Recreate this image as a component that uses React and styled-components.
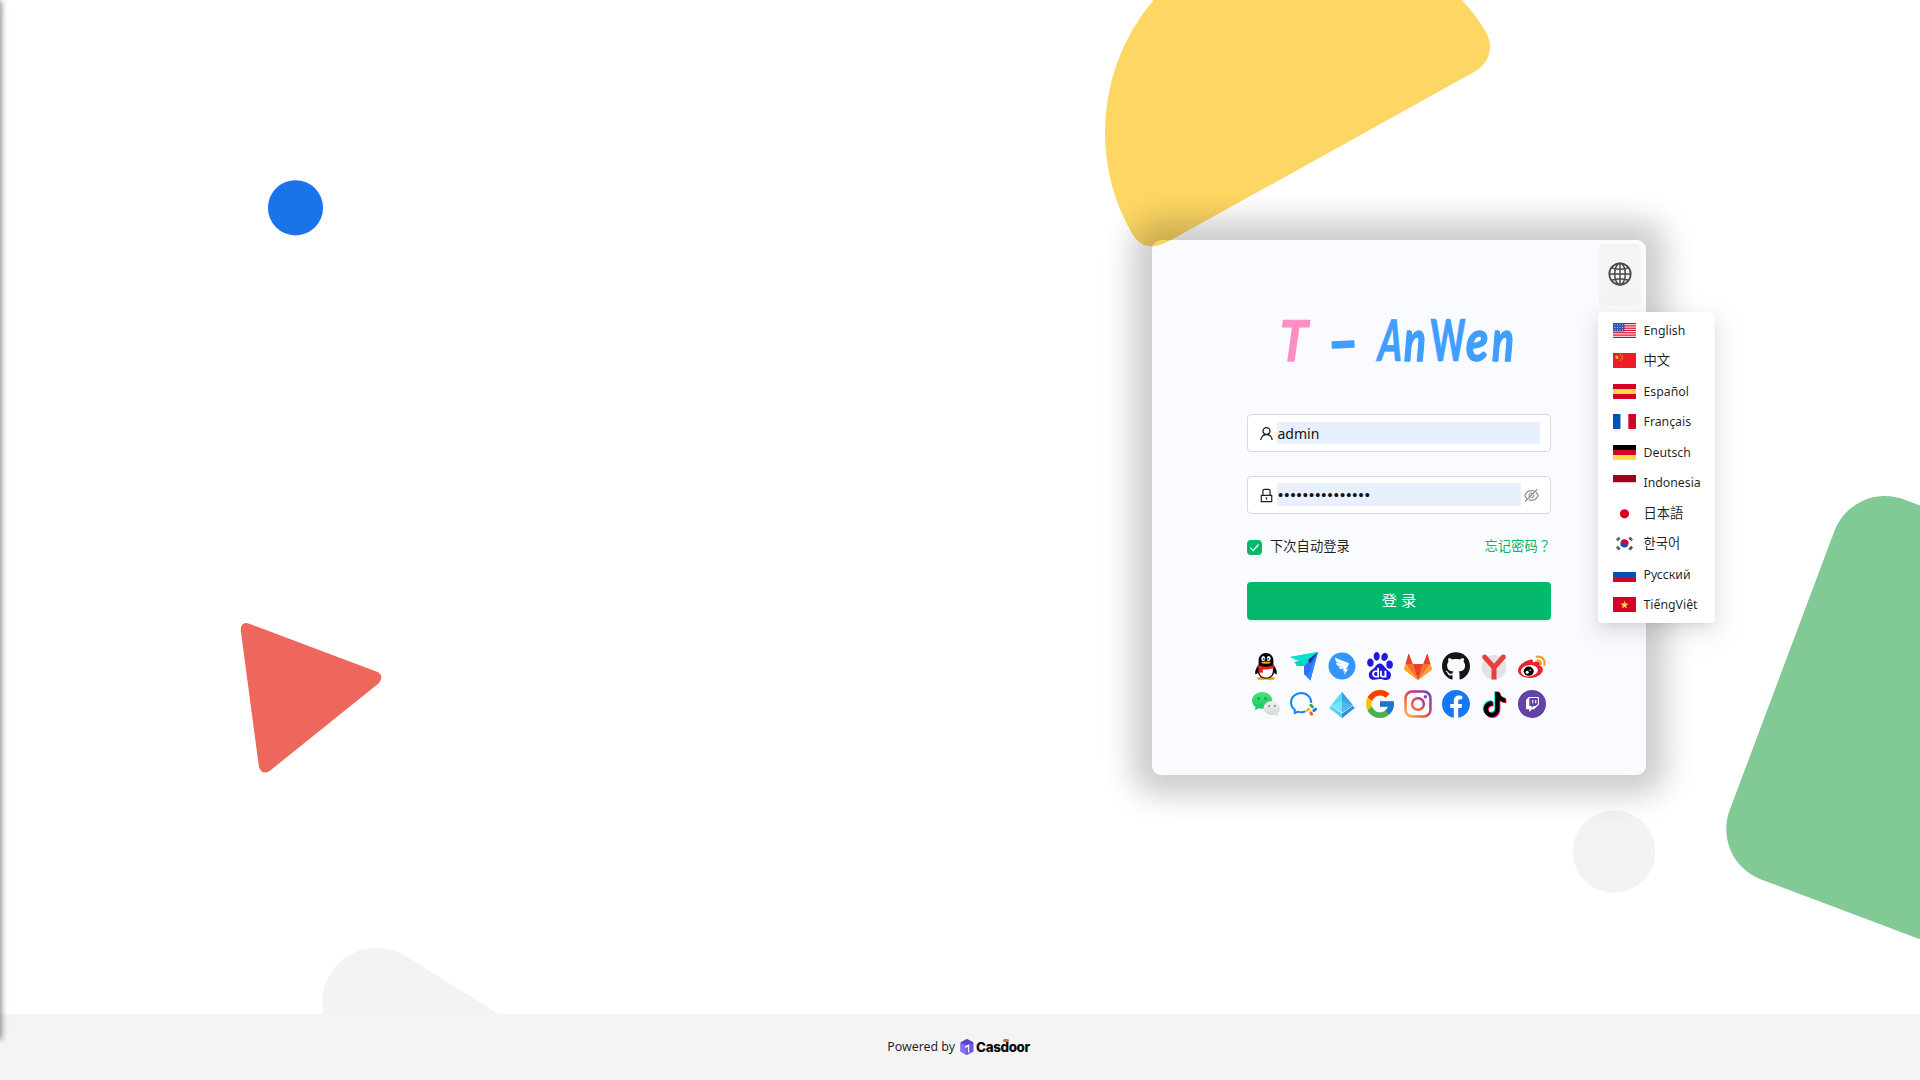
import React from "react";
import styled, { createGlobalStyle } from "styled-components";
import {
  AiOutlineUser,
  AiOutlineLock,
  AiOutlineEyeInvisible,
  AiFillDingtalkCircle,
} from "react-icons/ai";
import { FaGithub, FaFacebook, FaTiktok } from "react-icons/fa";
import { SiBaidu, SiTwitch } from "react-icons/si";
import { FcGoogle } from "react-icons/fc";

const GlobalStyle = createGlobalStyle`
  *, *::before, *::after { box-sizing: border-box; }
  body {
    margin: 0;
    background: #fff;
    color: rgba(0, 0, 0, 0.88);
    font-family: "Noto Sans", "Noto Sans CJK SC", "Noto Sans CJK KR", sans-serif;
    font-size: 13.3px;
  }
`;

/* ---------- page frame ---------- */

const Page = styled.div`
  position: relative;
  display: flex;
  flex-direction: column;
  width: 1920px;
  height: 1080px;
  overflow: hidden;
`;

const Backdrop = styled.svg`
  position: absolute;
  inset: 0;
  display: block;
`;

const EdgeShadow = styled.div`
  position: absolute;
  left: -4px;
  top: 2px;
  width: 4px;
  height: 1036px;
  box-shadow: 0 0 6px 1px rgba(0, 0, 0, 0.55);
  z-index: 3;
`;

const Main = styled.main`
  position: relative;
  flex: 1;
  display: flex;
  justify-content: flex-end;
  align-items: flex-start;
  padding: 240px 274px 0 0;
`;

const Footer = styled.footer`
  position: relative;
  display: flex;
  justify-content: center;
  align-items: center;
  height: 66px;
  padding-right: 3px;
  background: #f4f4f4;
  font-size: 12.4px;
  line-height: 18px;
`;

const Brand = styled.span`
  display: inline-flex;
  align-items: center;
  gap: 2px;
  margin-left: 5px;
`;

const BrandName = styled.span`
  position: relative;
  color: #0b0b0b;
  font-family: Inter, sans-serif;
  font-size: 13.4px;
  font-weight: 800;
  letter-spacing: -0.35px;

  &::after {
    content: "";
    position: absolute;
    top: 1px;
    left: 27px;
    width: 6px;
    height: 3px;
    border-radius: 2px;
    background: #c2703a;
  }
`;

/* ---------- login card ---------- */

const Card = styled.section`
  position: relative;
  display: flex;
  flex-direction: column;
  align-items: center;
  width: 494px;
  height: 535px;
  padding-top: 60px;
  border-radius: 9px;
  background: rgba(0, 64, 255, 0.024);
  box-shadow: 0 0 30px 20px rgba(0, 0, 0, 0.2);
`;

const Logo = styled.svg`
  display: block;
  width: 304px;
  height: 80px;
  margin-bottom: 34px;
  overflow: visible;
`;

const Form = styled.form`
  display: flex;
  flex-direction: column;
  width: 304px;
`;

const Field = styled.label`
  display: flex;
  align-items: center;
  height: 38px;
  margin-bottom: 24px;
  padding: 0 10px 0 10px;
  border: 1px solid #d9d9d9;
  border-radius: 4px;
  background: #fff;
`;

const FieldIcon = styled.span`
  display: flex;
  flex: none;
  width: 19px;
  color: ${(p) => (p.$muted ? "#8f8f8f" : "#1f1f1f")};
  font-size: 17px;
  justify-content: ${(p) => (p.$muted ? "flex-end" : "flex-start")};
`;

const FieldValue = styled.span`
  flex: 1;
  height: ${(p) => (p.$secret ? 23 : 22)}px;
  margin-top: ${(p) => (p.$secret ? -1 : 0)}px;
  padding-left: ${(p) => (p.$secret ? 1 : 0.5)}px;
  background: #e8f0fe;
  color: #111;
  font-family: ${(p) => (p.$secret ? '"Liberation Sans"' : '"Noto Sans"')}, sans-serif;
  font-size: ${(p) => (p.$secret ? 14.5 : 14)}px;
  line-height: ${(p) => (p.$secret ? 24 : 23)}px;
  letter-spacing: ${(p) => (p.$secret ? "1.12px" : "0")};
`;

const Options = styled.div`
  display: flex;
  align-items: center;
  justify-content: space-between;
  height: 20px;
  margin: -1px 0 25px;
`;

const Remember = styled.span`
  display: inline-flex;
  align-items: center;
  gap: 8px;
`;

const OptionText = styled.span`
  height: 22px;
  line-height: 20px;
`;

const CheckBox = styled.span`
  display: flex;
  width: 15px;
  height: 15px;
  border-radius: 4px;
  background: #04b96b;
`;

const Forgot = styled.a`
  height: 22px;
  color: #04b96b;
  line-height: 20px;
`;

const FullWidthMark = styled.span`
  font-family: "Noto Sans CJK TC", sans-serif;
`;

const Submit = styled.button`
  height: 38px;
  padding: 0 0 2px;
  border: 0;
  border-radius: 4px;
  background: #04b96b;
  box-shadow: 0 2px 0 rgba(4, 185, 107, 0.1);
  color: #fff;
  font-family: "Noto Sans", "Noto Sans CJK SC", sans-serif;
  font-size: 15.2px;
  line-height: 36px;
`;

const Providers = styled.div`
  display: grid;
  grid-template-columns: repeat(8, 38px);
  grid-auto-rows: 38px;
  place-items: center;
  margin-top: 27px;
`;

const Provider = styled.a`
  display: flex;
  width: 28px;
  height: 28px;
`;

const Badge = styled.span`
  display: flex;
  align-items: center;
  justify-content: center;
  width: 28px;
  height: 28px;
  border-radius: 50%;
  background: ${(p) => p.$fill};
`;

const Stack = styled.span`
  display: grid;
  place-items: center;
  width: 28px;
  height: 28px;
  & > svg { grid-area: 1 / 1; }
`;

const Layer = styled(FaTiktok)`
  color: ${(p) => p.color};
  transform: translate(${(p) => p.$shift}px, ${(p) => p.$shift}px);
`;

/* ---------- language menu ---------- */

const LanguageButton = styled.div`
  position: absolute;
  top: 4px;
  right: 5px;
  display: flex;
  align-items: center;
  justify-content: center;
  width: 42px;
  height: 61px;
  padding: 0 1px 1px 0;
  border-radius: 4px;
  background: #f4f4f4;
`;

const Menu = styled.ul`
  position: absolute;
  top: 72px;
  left: 446px;
  z-index: 2;
  display: flex;
  flex-direction: column;
  width: 117px;
  height: 311px;
  margin: 0;
  padding: 3px 4px;
  border-radius: 4px;
  background: #fff;
  box-shadow:
    0 6px 16px 0 rgba(0, 0, 0, 0.08),
    0 3px 6px -4px rgba(0, 0, 0, 0.12),
    0 9px 28px 8px rgba(0, 0, 0, 0.05);
  list-style: none;
`;

const MenuItem = styled.li`
  flex: 1;
  display: flex;
  align-items: center;
  gap: 7.5px;
  padding-left: 11px;
  font-size: ${(p) => (p.$cjk ? 13.3 : 12.3)}px;
  line-height: 20px;
  white-space: nowrap;
`;

const MenuLabel = styled.span`
  padding-top: ${(p) => (p.$cjk ? 0 : 1)}px;
  padding-bottom: ${(p) => (p.$cjk ? 1 : 0)}px;
`;

const FlagBox = styled.svg`
  display: block;
  flex: none;
  width: 23px;
  height: 15px;
`;

const Bands = ({ colors, vertical }) =>
  colors.map((c, i) =>
    vertical ? (
      <rect key={i} x={(i * 23) / colors.length} width={23 / colors.length} height="15" fill={c} />
    ) : (
      <rect key={i} y={(i * 15) / colors.length} width="23" height={15 / colors.length} fill={c} />
    )
  );

const star = (cx, cy, r) =>
  Array.from({ length: 10 }, (_, i) => {
    const a = (Math.PI / 5) * i - Math.PI / 2;
    const q = i % 2 ? r * 0.4 : r;
    return `${cx + q * Math.cos(a)},${cy + q * Math.sin(a)}`;
  }).join(" ");

const languages = [
  {
    name: "English",
    flag: (
      <>
        <rect width="23" height="15" fill="#fff" />
        {[0, 1, 2, 3, 4, 5, 6].map((i) => (
          <rect key={i} y={i * 2.3} width="23" height="1.2" fill="#d80027" />
        ))}
        <rect width="11.5" height="8.5" fill="#2e52b2" />
        {[1.5, 4, 6.5].map((y) =>
          [1.5, 4, 6.5, 9].map((x) => (
            <rect key={`${x}-${y}`} x={x} y={y} width="1" height="1" fill="#c9d3ee" />
          ))
        )}
      </>
    ),
  },
  {
    name: "中文",
    cjk: true,
    flag: (
      <>
        <rect width="23" height="15" fill="#ee1c25" />
        <polygon points={star(4, 4.2, 2.4)} fill="#ffda2c" />
        {[[7.6, 1.6], [9.2, 3.4], [9.2, 5.6], [7.6, 7.2]].map(([x, y]) => (
          <circle key={y} cx={x} cy={y} r="0.6" fill="#ffda2c" />
        ))}
      </>
    ),
  },
  {
    name: "Español",
    flag: (
      <>
        <rect width="23" height="15" fill="#d80027" />
        <rect y="5" width="23" height="5" fill="#ffda44" />
      </>
    ),
  },
  { name: "Français", flag: <Bands vertical colors={["#0052b4", "#fff", "#d80027"]} /> },
  { name: "Deutsch", flag: <Bands colors={["#000", "#d80027", "#ffda44"]} /> },
  { name: "Indonesia", flag: <Bands colors={["#a2001d", "#fff"]} /> },
  { name: "日本語", cjk: true, flag: <circle cx="11.5" cy="7.8" r="4.6" fill="#d80027" /> },
  {
    name: "한국어",
    cjk: true,
    flag: (
      <>
        <path d="M7.6 6.2a4 4 0 0 1 7.8 2.4q-2 1.6-3.9-.6-2-2-3.9-1.8z" fill="#d80027" />
        <path d="M7.6 6.2q2-.6 3.9 1.6t3.9.8a4 4 0 0 1-7.8-2.4z" fill="#0052b4" />
        <g stroke="#333" strokeWidth="2.8" strokeDasharray="1.1 0.3">
          <path d="M4 4.200 6.600 1.800M16.400 1.800 19 4.200M4 10.800 6.600 13.400M16.400 13.400 19 10.800" />
        </g>
      </>
    ),
  },
  { name: "Русский", flag: <Bands colors={["#fff", "#0052b4", "#d80027"]} /> },
  {
    name: "TiếngViệt",
    flag: (
      <>
        <rect width="23" height="15" fill="#d80027" />
        <polygon points={star(11.5, 8, 4.3)} fill="#ffda44" />
      </>
    ),
  },
];

/* ---------- provider icons ---------- */

const Icon28 = ({ children }) => (
  <svg width="28" height="28" viewBox="0 0 28 28" overflow="visible">
    {children}
  </svg>
);

const QQ = () => (
  <Icon28>
    <ellipse cx="9.8" cy="26.3" rx="4.6" ry="1.9" fill="#f9a51a" />
    <ellipse cx="18.2" cy="26.3" rx="4.6" ry="1.9" fill="#f9a51a" />
    <path d="M14 1C9.500 1 6.600 4.200 6.600 8.500v4C4.800 15 2.800 18.500 3.200 21.400c.3 1.600 1.500.9 2.600-.8C6.800 24.500 10 26.600 14 26.600s7.200-2.100 8.200-6c1.100 1.700 2.300 2.400 2.600.8.4-2.900-1.600-6.400-3.400-8.900v-4C21.400 4.200 18.500 1 14 1z" fill="#050505" />
    <path d="M7.300 15.500C6.200 22 9.300 25.600 14 25.600s7.800-3.600 6.700-10.100z" fill="#fff" />
    <ellipse cx="11.3" cy="6.500" rx="1.900" ry="2.500" fill="#fff" />
    <ellipse cx="16.7" cy="6.500" rx="1.900" ry="2.500" fill="#fff" />
    <circle cx="11.800" cy="6.900" r=".8" />
    <circle cx="16.200" cy="6.900" r=".8" />
    <ellipse cx="14" cy="10.600" rx="4.600" ry="1.200" fill="#f9a51a" />
    <path d="M6.400 13c4.500 2.400 10.700 2.400 15.200 0l.9 2.500c-3.400 1.800-7.600 2.500-11.600 1.900v3.400l-4.500-.4.300-4.100-1.100-1z" fill="#eb1c23" />
  </Icon28>
);

const Lark = () => (
  <Icon28>
    <path d="M0 5 28 0 14 14l-7 .3L4.400 10.200 9 8.200z" fill="#00d6b9" />
    <path d="M0 5 28 0 18 8.600 6 8z" fill="#00e5d0" />
    <path d="M28 0 20.400 28.600 14 22V14l5-5z" fill="#3370ff" />
    <path d="M28 0 20.400 28.600 17 25z" fill="#2b8cff" />
    <path d="m28 0-9.500 7.300V10l2 1z" fill="#133c9a" />
  </Icon28>
);

const GitLab = () => (
  <Icon28>
    <path d="M14 28.500 8.800 12h10.400z" fill="#e24329" />
    <path d="M14 28.500 8.800 12H1.500zM14 28.500 19.200 12h7.300z" fill="#fc6d26" />
    <path d="M1.500 12 0 16.700q-.1.700.5 1.200L14 28.500zM26.500 12l1.500 4.700q.1.700-.5 1.200L14 28.500z" fill="#fca326" />
    <path d="M1.500 12h7.300L5.200 2.300q-.5-.9-1 0zM26.500 12h-7.300l3.600-9.700q.5-.9 1 0z" fill="#e24329" />
  </Icon28>
);

const Yandex = () => (
  <Icon28>
    <circle cx="14" cy="15.300" r="12.300" fill="#e3e3e3" />
    <path d="M4.800 5.200 14 15.500l9.200-10.300M14 15v12.500" fill="none" stroke="#e8403c" strokeWidth="5" />
    <circle cx="4.700" cy="5" r="2.500" fill="#e8403c" />
    <circle cx="23.300" cy="5" r="2.500" fill="#e8403c" />
  </Icon28>
);

const Weibo = () => (
  <Icon28>
    <path d="M10.500 8.300C12 7.600 14.300 7 14.800 8.700c.3 1-.1 1.700 0 1.900 1.800-.9 5-1.700 6.400-.3 1 1 .5 2.300.2 3.200 1.800.6 3.400 1.700 3.400 4 0 4.500-6 8.500-12.600 8.500C5.700 26 0 23 0 18.500 0 14.200 5.500 9.700 10.500 8.300z" fill="#e6242a" />
    <ellipse cx="11.400" cy="18.700" rx="8.500" ry="5.600" fill="#fff" transform="rotate(-8 11.400 18.700)" />
    <ellipse cx="10.700" cy="19.200" rx="5" ry="4.600" fill="#050505" />
    <circle cx="9.200" cy="20.300" r="1.500" fill="#fff" />
    <circle cx="12.200" cy="18.300" r=".7" fill="#fff" />
    <path d="M18.600 4.800c5-1.300 9.200 3 7.700 8.200M19.300 8.600c2.400-.6 4.200 1.300 3.500 3.700" fill="none" stroke="#f8991c" strokeWidth="2" strokeLinecap="round" />
  </Icon28>
);

const WeChat = () => (
  <Icon28>
    <defs>
      <linearGradient id="wx" x2="0" y2="1">
        <stop stopColor="#4ee080" />
        <stop offset="1" stopColor="#0ccb5c" />
      </linearGradient>
      <linearGradient id="wx2" x2="0" y2="1">
        <stop stopColor="#f1f1f1" />
        <stop offset="1" stopColor="#d5d5d5" />
      </linearGradient>
    </defs>
    <path d="M10 2C4.500 2 0 5.700 0 10.500c0 2.700 1.400 5 3.600 6.600L3 20.300l3.800-2c4.800 1.400 13.500-.8 13.500-7.800C20.300 5.700 15.600 2 10 2z" fill="url(#wx)" />
    <path d="M20 11c-4.700 0-8.400 3.200-8.400 7.100s3.700 7 8.400 7c1 0 2-.1 2.900-.4l3 1.600-.6-2.700c1.700-1.300 2.800-3.300 2.800-5.500C28.100 14.200 24.500 11 20 11z" fill="url(#wx2)" />
    <circle cx="6.600" cy="8.500" r="1.300" fill="#179a50" />
    <circle cx="13.500" cy="8.500" r="1.300" fill="#179a50" />
    <circle cx="17.100" cy="16" r="1" fill="#858585" />
    <circle cx="22.900" cy="16" r="1" fill="#858585" />
  </Icon28>
);

const WeCom = () => (
  <Icon28>
    <path d="M15.500 21.300c-2.400 1.100-5.200 1.100-7.600.3L4.600 23.100l.2-3.400C2.400 17.800 1 15.300 1 12.400 1 7.300 5.500 3 11.200 3S21.300 7.300 21.300 13" fill="none" stroke="#0f85ee" strokeWidth="1.900" strokeLinejoin="round" />
    <g strokeWidth="2.900" strokeLinecap="round">
      <path d="m20.900 15.300 1.500 1.500" stroke="#2faa3f" />
      <path d="m25.600 19.200-1.700 1.300" stroke="#0a7be8" />
      <path d="m21.700 24.300-.9-1.600" stroke="#fb5b1f" />
      <path d="m17 20.300 1.900-1" stroke="#fbb80f" />
    </g>
  </Icon28>
);

const Azure = () => (
  <Icon28>
    <path d="m14 1.700-11 13.500 11 7.200z" fill="#53dcfb" />
    <path d="m14 1.700 11 13.500-11 7.200z" fill="#3aa3e4" />
    <path d="m3 15.200 11-4v11.200z" fill="#8eeaff" opacity=".6" />
    <path d="m14 11.200 11 4-11 7.200z" fill="#5fc3f2" opacity=".6" />
    <path d="m1 17.800 2.300-1.900L14 23.500V28.200z" fill="#53d1f8" />
    <path d="m27 17.800-2.300-1.900L14 23.500V28.200z" fill="#2f8fdc" />
  </Icon28>
);

const Instagram = () => (
  <Icon28>
    <defs>
      <linearGradient id="ig" x1="0" y1="1" x2="1" y2="0">
        <stop stopColor="#fdc65b" />
        <stop offset=".35" stopColor="#f1663f" />
        <stop offset=".65" stopColor="#b63783" />
        <stop offset="1" stopColor="#5b4fc4" />
      </linearGradient>
    </defs>
    <path
      fill="url(#ig)"
      fillRule="evenodd"
      d="M8 .3h12A7.700 7.700 0 0 1 27.700 8v12a7.700 7.700 0 0 1-7.700 7.700H8A7.700 7.700 0 0 1 .3 20V8A7.700 7.700 0 0 1 8 .3zm.3 2.500a5.500 5.500 0 0 0-5.500 5.500v11.400a5.500 5.500 0 0 0 5.500 5.500h11.400a5.500 5.500 0 0 0 5.500-5.500V8.300a5.500 5.500 0 0 0-5.500-5.500zM14 6.900a7.100 7.100 0 1 1 0 14.200 7.100 7.100 0 0 1 0-14.200zm0 2.500a4.600 4.600 0 1 0 0 9.200 4.600 4.600 0 0 0 0-9.200zM21.400 5a1.700 1.700 0 1 1 0 3.400 1.700 1.700 0 0 1 0-3.400z"
    />
  </Icon28>
);

const providers = [
  ["QQ", <QQ />],
  ["Lark", <Lark />],
  ["DingTalk", <AiFillDingtalkCircle size={28} viewBox="48 48 928 928" color="#3296fa" />],
  ["Baidu", <SiBaidu size={28} color="#2319dc" />],
  ["GitLab", <GitLab />],
  ["GitHub", <FaGithub size={28} viewBox="0 8 496 488" color="#161414" />],
  ["Yandex", <Yandex />],
  ["Weibo", <Weibo />],
  ["WeChat", <WeChat />],
  ["WeCom", <WeCom />],
  ["Azure", <Azure />],
  ["Google", <FcGoogle size={28} viewBox="4 4 40 40" />],
  ["Instagram", <Instagram />],
  ["Facebook", <Badge $fill="#fff"><FaFacebook size={28} viewBox="8 8 496 496" color="#1877f2" /></Badge>],
  [
    "TikTok",
    <Stack>
      <Layer size={25} color="#00f2ea" $shift={-0.9} />
      <Layer size={25} color="#ff004f" $shift={0.9} />
      <Layer size={25} color="#000" $shift={0} />
    </Stack>,
  ],
  ["Twitch", <Badge $fill="#6441a5"><SiTwitch size={15} color="#fff" /></Badge>],
];

const Shapes = () => (
  <Backdrop width="1920" height="1080" viewBox="0 0 1920 1080">
    <circle cx="295.500" cy="207.800" r="27.600" fill="#1a73e8" />
    <circle cx="1614" cy="851.700" r="41.200" fill="#f1f3f4" />
    <path d="M323.500 1014A54.500 54.500 0 0 1 406.500 956.600L498.500 1014z" fill="#f1f3f4" />
    <path d="M1131.700 233A205 205 0 0 1 1105 135A205 205 0 0 1 1153.500 0L1461.700 0Q1475.500 14 1486.700 33.500C1493 46 1491 62.500 1474 72L1172 239.500C1154 249.500 1141 249 1131.700 233z" fill="#fdd663" />
    <path d="M249.300 623.700 378.300 672.300Q384.500 677 378.500 683.500L270 770.700Q262 776 258.900 766.700L240.700 630Q241 621 249.300 623.700z" fill="#ee675c" />
    <path d="M1920 505.500 1904.200 499.500A54 54 0 0 0 1834.500 530.800L1729.800 809.800A54 54 0 0 0 1761.100 879.500L1920 939.300z" fill="#81c995" />
  </Backdrop>
);

const Globe = () => (
  <svg width="24" height="24" viewBox="0 0 24 24" fill="none" stroke="#4a4a4a" strokeWidth="1.500">
    <circle cx="12" cy="12" r="10.700" strokeWidth="1.700" />
    <ellipse cx="12" cy="12" rx="5.300" ry="10.700" />
    <path d="M12 1.300v21.400M1.300 12h21.400M3.600 5.700q8.400 3.200 16.800 0M3.600 18.300q8.400-3.200 16.800 0" />
  </svg>
);

const letters = [
  { ch: "A", x: 129, wide: 0.6, weight: 900, skew: -8 },
  { ch: "n", x: 157, wide: 0.71, weight: 700, italic: true },
  { ch: "W", x: 183.5, wide: 0.58, weight: 900 },
  { ch: "e", x: 219, wide: 0.8, weight: 700, italic: true },
  { ch: "n", x: 245, wide: 0.71, weight: 700, italic: true },
];

const Wordmark = () => (
  <Logo viewBox="0 0 304 80" fontFamily="Lato, sans-serif" strokeLinejoin="round">
    <g fill="#ff8fc3" stroke="#ff8fc3" strokeWidth="1.400">
      <text transform="translate(30 61) skewX(-8) scale(.83 1)" fontSize="56" fontWeight="700">T</text>
    </g>
    <g fill="#409eff" stroke="#409eff" strokeWidth="2" strokeLinecap="round">
      <text transform="translate(82 62.500) rotate(-3) scale(.91 1)" fontSize="57" fontWeight="900">–</text>
      {letters.map((l) => (
        <text
          key={l.x}
          transform={`translate(${l.x} 61) skewX(${l.skew || 0}) scale(${l.wide} 1)`}
          fontSize="57"
          fontWeight={l.weight}
          fontStyle={l.italic ? "italic" : "normal"}
          strokeWidth={l.weight === 900 ? 0.6 : 1.6}
        >
          {l.ch}
        </text>
      ))}
    </g>
  </Logo>
);

const Cube = () => (
  <svg width="14" height="16" viewBox="0 0 14 16">
    <path d="M7 0 13.500 3.500v9L7 16 .5 12.500v-9z" fill="#6a55e0" />
    <path d="M7 0 13.500 3.500 8 6 .5 3.500z" fill="#5746c6" />
    <path d="M.5 4 6 6.500V16L.5 12.500z" fill="#8473ee" />
    <path d="M5 7.200 9.300 5v8.200l-1.400.7V8L5 9z" fill="#efeaff" />
  </svg>
);

export default function App() {
  return (
    <Page>
      <GlobalStyle />
      <Shapes />
      <EdgeShadow />
      <Main>
        <Card>
          <LanguageButton>
            <Globe />
          </LanguageButton>
          <Menu>
            {languages.map((l) => (
              <MenuItem key={l.name} $cjk={l.cjk}>
                <FlagBox viewBox="0 0 23 15">{l.flag}</FlagBox>
                <MenuLabel $cjk={l.cjk}>{l.name}</MenuLabel>
              </MenuItem>
            ))}
          </Menu>
          <Wordmark />
          <Form>
            <Field>
              <FieldIcon><AiOutlineUser /></FieldIcon>
              <FieldValue>admin</FieldValue>
            </Field>
            <Field>
              <FieldIcon><AiOutlineLock /></FieldIcon>
              <FieldValue $secret>•••••••••••••••</FieldValue>
              <FieldIcon $muted><AiOutlineEyeInvisible /></FieldIcon>
            </Field>
            <Options>
              <Remember>
                <CheckBox>
                  <svg width="15" height="15" viewBox="0 0 15 15" fill="none" stroke="#fff" strokeWidth="1.200">
                    <path d="m3.300 7.600 2.900 2.900 5.300-6" />
                  </svg>
                </CheckBox>
                <OptionText>下次自动登录</OptionText>
              </Remember>
              <Forgot>
                忘记密码<FullWidthMark>？</FullWidthMark>
              </Forgot>
            </Options>
            <Submit type="button">登 录</Submit>
            <Providers>
              {providers.map(([name, icon]) => (
                <Provider key={name}>{icon}</Provider>
              ))}
            </Providers>
          </Form>
        </Card>
      </Main>
      <Footer>
        Powered by
        <Brand>
          <Cube />
          <BrandName>Casdoor</BrandName>
        </Brand>
      </Footer>
    </Page>
  );
}
